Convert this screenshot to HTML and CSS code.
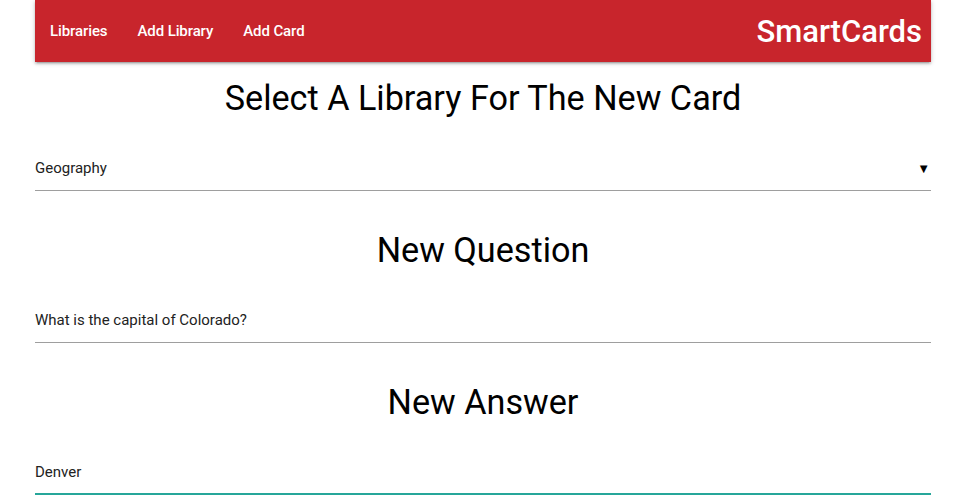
FILE: index.html
```html
<!DOCTYPE html>
<html>
<head>
<meta charset="utf-8">
<link rel="stylesheet" href="styles.css">
</head>
<body>
<div class="container">
  <nav class="nav">
    <ul class="nav-links">
      <li><a href="#">Libraries</a></li>
      <li><a href="#">Add Library</a></li>
      <li><a href="#">Add Card</a></li>
    </ul>
    <a class="brand" href="#">SmartCards</a>
  </nav>
  <main class="form">
    <h2 class="title">Select A Library For The New Card</h2>
    <div class="field select">
      <span>Geography</span>
      <span class="caret">▼</span>
    </div>
    <h2 class="title">New Question</h2>
    <div class="field">What is the capital of Colorado?</div>
    <h2 class="title">New Answer</h2>
    <div class="field focus">Denver</div>
  </main>
</div>
</body>
</html>
```
FILE: styles.css
```css
html, body {
  margin: 0;
  padding: 0;
  background: #fff;
  font-family: Roboto, "Liberation Sans", sans-serif;
}
.container {
  width: 896px;
  margin: 0 0 0 35px;
}
.nav {
  height: 62px;
  background: #c8252c;
  display: flex;
  align-items: center;
  justify-content: space-between;
  box-shadow: 0 2px 2px 0 rgba(0,0,0,0.14), 0 3px 1px -2px rgba(0,0,0,0.12), 0 1px 5px 0 rgba(0,0,0,0.2);
}
.nav-links {
  list-style: none;
  margin: 0;
  padding: 0;
  display: flex;
}
.nav-links a {
  display: block;
  padding: 0 15px;
  color: #fff;
  text-decoration: none;
  font-size: 15px;
  font-weight: 500;
  letter-spacing: -0.1px;
  line-height: 62px;
}
.brand {
  color: #fff;
  text-decoration: none;
  font-size: 31px;
  font-weight: 500;
  padding-right: 9px;
}
.form {
  display: flex;
  flex-direction: column;
}
.title {
  margin: 16px 0 28px;
  font-weight: 400;
  font-size: 34.2px;
  line-height: 40px;
  text-align: center;
  color: #000;
}
.title + .field + .title { margin-top: 39px; }
.field {
  height: 44px;
  border-bottom: 1px solid #9e9e9e;
  display: flex;
  align-items: center;
  font-size: 15px;
  color: #222;
}
.field.select {
  justify-content: space-between;
}
.caret {
  font-size: 13px;
  color: #000;
  padding-right: 1px;
}
.field.focus {
  height: 43px;
  border-bottom: 2px solid #26a69a;
}
```
